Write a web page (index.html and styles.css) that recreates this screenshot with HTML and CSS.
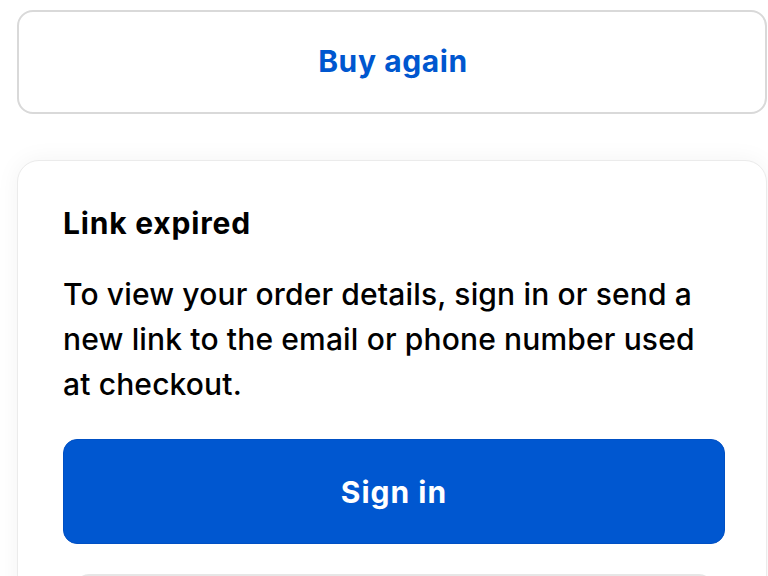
FILE: index.html
```html
<!DOCTYPE html>
<html lang="en">
<head>
<meta charset="utf-8">
<title>Link expired</title>
<link rel="stylesheet" href="styles.css">
</head>
<body>
<main class="page">
  <button class="btn-outline" type="button">Buy again</button>
  <section class="card">
    <h2 class="card-title">Link expired</h2>
    <p class="card-text">To view your order details, sign in or send a new link to the email or phone number used at checkout.</p>
    <div class="actions">
      <button class="btn-primary" type="button">Sign in</button>
      <button class="btn-secondary" type="button" aria-label="Send new link"></button>
    </div>
  </section>
</main>
</body>
</html>
```
FILE: styles.css
```css
* { box-sizing: border-box; }
html, body { margin: 0; padding: 0; background: #ffffff; }
body {
  font-family: Inter, "Noto Sans", "Liberation Sans", sans-serif;
  color: #000;
  overflow: hidden;
  height: 576px;
}
.page {
  display: flex;
  flex-direction: column;
  padding: 10px 1px 0 17px;
  gap: 46px;
}
.btn-outline {
  height: 104px;
  width: 100%;
  border: 2px solid #d9d9d9;
  border-radius: 16px;
  background: #fff;
  color: #0057cf;
  font-family: inherit;
  font-size: 30px;
  font-weight: 700;
  letter-spacing: 0.6px;
  padding: 0 0 2px 2px;
}
.card {
  background: #fff;
  border: 1px solid #ebebeb;
  border-radius: 22px;
  box-shadow: 0 0 24px rgba(0, 0, 0, 0.05);
  padding: 42px 41px 40px 45px;
  display: flex;
  flex-direction: column;
}
.card-title {
  margin: 0;
  font-size: 30px;
  font-weight: 700;
  line-height: 40px;
  letter-spacing: 0.8px;
}
.card-text {
  margin: 29px 0 0;
  font-size: 30px;
  font-weight: 500;
  line-height: 45px;
  letter-spacing: 0.15px;
}
.actions {
  margin-top: 32px;
  display: flex;
  flex-direction: column;
  gap: 30px;
}
.btn-primary {
  height: 105px;
  border: 1px solid #0050c4;
  border-radius: 14px;
  background: #0057d0;
  color: #fff;
  font-family: inherit;
  font-size: 30px;
  font-weight: 700;
  letter-spacing: 1px;
  padding: 0;
}
.btn-secondary {
  height: 106px;
  margin: 0 12px;
  border: 2px solid #e6e6e6;
  border-radius: 14px;
  background: #fff;
  padding: 0;
}
```
